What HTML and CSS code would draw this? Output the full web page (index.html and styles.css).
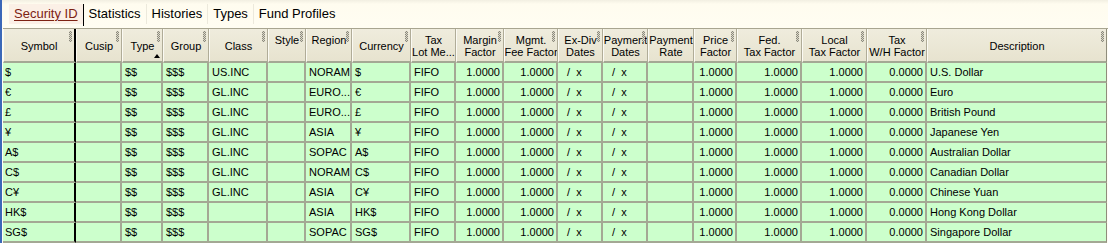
FILE: index.html
```html
<!DOCTYPE html>
<html>
<head>
<meta charset="utf-8">
<link rel="stylesheet" href="styles.css">
</head>
<body>
<div class="app">
  <div class="tabs">
    <span class="tab active">Security ID</span><span class="sep dark"></span><span class="tab">Statistics</span><span class="sep"></span><span class="tab">Histories</span><span class="sep"></span><span class="tab">Types</span><span class="sep"></span><span class="tab">Fund Profiles</span>
  </div>
  <div class="grid">
    <div class="h sym grip"><span>Symbol</span></div>
    <div class="h grip"><span>Cusip</span></div>
    <div class="h grip sorted"><span>Type</span></div>
    <div class="h grip"><span>Group</span></div>
    <div class="h grip"><span>Class</span></div>
    <div class="h grip top"><span>Style</span></div>
    <div class="h grip top"><span>Region</span></div>
    <div class="h grip"><span>Currency</span></div>
    <div class="h"><span>Tax<br>Lot Me...</span></div>
    <div class="h grip"><span>Margin<br>Factor</span></div>
    <div class="h grip"><span>Mgmt.<br>Fee Factor</span></div>
    <div class="h grip"><span>Ex-Div<br>Dates</span></div>
    <div class="h grip"><span>Payment<br>Dates</span></div>
    <div class="h"><span>Payment<br>Rate</span></div>
    <div class="h grip"><span>Price<br>Factor</span></div>
    <div class="h grip"><span>Fed.<br>Tax Factor</span></div>
    <div class="h grip"><span>Local<br>Tax Factor</span></div>
    <div class="h grip"><span>Tax<br>W/H Factor</span></div>
    <div class="h grip last"><span>Description</span></div>

    <div class="c sym">$</div><div class="c"></div><div class="c">$$</div><div class="c">$$$</div><div class="c">US.INC</div><div class="c"></div><div class="c">NORAM</div><div class="c">$</div><div class="c">FIFO</div><div class="c n">1.0000</div><div class="c n">1.0000</div><div class="c d">/  x</div><div class="c d">/  x</div><div class="c"></div><div class="c n">1.0000</div><div class="c n">1.0000</div><div class="c n">1.0000</div><div class="c n">0.0000</div><div class="c last">U.S. Dollar</div>

    <div class="c sym">€</div><div class="c"></div><div class="c">$$</div><div class="c">$$$</div><div class="c">GL.INC</div><div class="c"></div><div class="c">EURO...</div><div class="c">€</div><div class="c">FIFO</div><div class="c n">1.0000</div><div class="c n">1.0000</div><div class="c d">/  x</div><div class="c d">/  x</div><div class="c"></div><div class="c n">1.0000</div><div class="c n">1.0000</div><div class="c n">1.0000</div><div class="c n">0.0000</div><div class="c last">Euro</div>

    <div class="c sym">£</div><div class="c"></div><div class="c">$$</div><div class="c">$$$</div><div class="c">GL.INC</div><div class="c"></div><div class="c">EURO...</div><div class="c">£</div><div class="c">FIFO</div><div class="c n">1.0000</div><div class="c n">1.0000</div><div class="c d">/  x</div><div class="c d">/  x</div><div class="c"></div><div class="c n">1.0000</div><div class="c n">1.0000</div><div class="c n">1.0000</div><div class="c n">0.0000</div><div class="c last">British Pound</div>

    <div class="c sym">¥</div><div class="c"></div><div class="c">$$</div><div class="c">$$$</div><div class="c">GL.INC</div><div class="c"></div><div class="c">ASIA</div><div class="c">¥</div><div class="c">FIFO</div><div class="c n">1.0000</div><div class="c n">1.0000</div><div class="c d">/  x</div><div class="c d">/  x</div><div class="c"></div><div class="c n">1.0000</div><div class="c n">1.0000</div><div class="c n">1.0000</div><div class="c n">0.0000</div><div class="c last">Japanese Yen</div>

    <div class="c sym">A$</div><div class="c"></div><div class="c">$$</div><div class="c">$$$</div><div class="c">GL.INC</div><div class="c"></div><div class="c">SOPAC</div><div class="c">A$</div><div class="c">FIFO</div><div class="c n">1.0000</div><div class="c n">1.0000</div><div class="c d">/  x</div><div class="c d">/  x</div><div class="c"></div><div class="c n">1.0000</div><div class="c n">1.0000</div><div class="c n">1.0000</div><div class="c n">0.0000</div><div class="c last">Australian Dollar</div>

    <div class="c sym">C$</div><div class="c"></div><div class="c">$$</div><div class="c">$$$</div><div class="c">GL.INC</div><div class="c"></div><div class="c">NORAM</div><div class="c">C$</div><div class="c">FIFO</div><div class="c n">1.0000</div><div class="c n">1.0000</div><div class="c d">/  x</div><div class="c d">/  x</div><div class="c"></div><div class="c n">1.0000</div><div class="c n">1.0000</div><div class="c n">1.0000</div><div class="c n">0.0000</div><div class="c last">Canadian Dollar</div>

    <div class="c sym">C¥</div><div class="c"></div><div class="c">$$</div><div class="c">$$$</div><div class="c">GL.INC</div><div class="c"></div><div class="c">ASIA</div><div class="c">C¥</div><div class="c">FIFO</div><div class="c n">1.0000</div><div class="c n">1.0000</div><div class="c d">/  x</div><div class="c d">/  x</div><div class="c"></div><div class="c n">1.0000</div><div class="c n">1.0000</div><div class="c n">1.0000</div><div class="c n">0.0000</div><div class="c last">Chinese Yuan</div>

    <div class="c sym">HK$</div><div class="c"></div><div class="c">$$</div><div class="c">$$$</div><div class="c"></div><div class="c"></div><div class="c">ASIA</div><div class="c">HK$</div><div class="c">FIFO</div><div class="c n">1.0000</div><div class="c n">1.0000</div><div class="c d">/  x</div><div class="c d">/  x</div><div class="c"></div><div class="c n">1.0000</div><div class="c n">1.0000</div><div class="c n">1.0000</div><div class="c n">0.0000</div><div class="c last">Hong Kong Dollar</div>

    <div class="c sym">SG$</div><div class="c"></div><div class="c">$$</div><div class="c">$$$</div><div class="c"></div><div class="c"></div><div class="c">SOPAC</div><div class="c">SG$</div><div class="c">FIFO</div><div class="c n">1.0000</div><div class="c n">1.0000</div><div class="c d">/  x</div><div class="c d">/  x</div><div class="c"></div><div class="c n">1.0000</div><div class="c n">1.0000</div><div class="c n">1.0000</div><div class="c n">0.0000</div><div class="c last">Singapore Dollar</div>

    <div class="c sym"></div><div class="c"></div><div class="c"></div><div class="c"></div><div class="c"></div><div class="c"></div><div class="c"></div><div class="c"></div><div class="c"></div><div class="c"></div><div class="c"></div><div class="c"></div><div class="c"></div><div class="c"></div><div class="c"></div><div class="c"></div><div class="c"></div><div class="c"></div><div class="c last"></div>
  </div>
</div>
</body>
</html>
```

FILE: styles.css
```css
html, body {
  margin: 0;
  padding: 0;
  background: #fffdf2;
  overflow: hidden;
}
.app {
  width: 1108px;
  height: 243px;
  overflow: hidden;
  border-left: 2px solid #3b68b8;
  box-sizing: border-box;
  background: #fffdf2;
  font-family: "Liberation Sans", Arial, sans-serif;
}
.tabs {
  height: 28px;
  display: flex;
  align-items: center;
  padding-left: 7px;
  background: linear-gradient(to bottom, #f2efe2 0, #fffcef 4px, #fffdf2 100%);
  font-size: 13px;
  color: #000;
}
.tab {
  padding: 0 5px;
  line-height: 20px;
}
.tab.active {
  color: #7d2213;
  text-decoration: underline;
  text-underline-offset: 2px;
  background: #fbf0e6;
}
.sep {
  width: 1px;
  height: 20px;
  background: #ece9dc;
}
.sep.dark {
  background: #000;
  height: 22px;
  margin-top: 2px;
}
.grid {
  display: grid;
  margin-left: 1px;
  grid-template-columns: 73px 46px 41px 46px 59px 38px 46px 59px 45px 48px 54px 45px 45px 46px 43px 65px 65px 60px 180px;
  grid-template-rows: 34px repeat(10, 20px);
  font-size: 11px;
  border-top: 1px solid #a8a590;
}
.h {
  position: relative;
  box-sizing: border-box;
  background: linear-gradient(to bottom, #efecdd 0%, #e7e3cf 100%);
  border-left: 1px solid #fbfaf3;
  border-right: 1px solid #b0ac98;
  border-bottom: 2px solid #a4a894;
  display: flex;
  align-items: center;
  justify-content: center;
  text-align: center;
  line-height: 12px;
  padding-top: 2px;
  color: #000;
  white-space: nowrap;
  overflow: hidden;
}
.h.top {
  align-items: flex-start;
  padding-top: 5px;
}
.h.sym {
  border-right: 2px solid #000;
}
.h.last {
  border-right: 1px solid #8f8c7c;
}
.grip::after {
  content: "";
  position: absolute;
  top: 2px;
  right: 2px;
  width: 3px;
  height: 11px;
  background: repeating-conic-gradient(#8a887c 0 25%, #dcd9c9 0 50%) 0 0 / 2px 2px;
}
.sorted::before {
  content: "";
  position: absolute;
  left: 31px;
  bottom: 3px;
  width: 0;
  height: 0;
  border-left: 3px solid transparent;
  border-right: 3px solid transparent;
  border-bottom: 4px solid #000;
}
.c {
  box-sizing: border-box;
  background: #ccffcc;
  border-right: 2px solid #a4a894;
  border-bottom: 2px solid #a4a894;
  padding: 0 2px 0 3px;
  line-height: 18px;
  white-space: pre;
  overflow: hidden;
  color: #000;
}
.c.sym {
  border-right: 2px solid #000;
  padding-left: 2px;
}
.c.n {
  text-align: right;
  padding-right: 2px;
}
.c.d {
  padding-left: 9px;
}
.c.last {
  border-right: 1px solid #8f8c7c;
}
```
